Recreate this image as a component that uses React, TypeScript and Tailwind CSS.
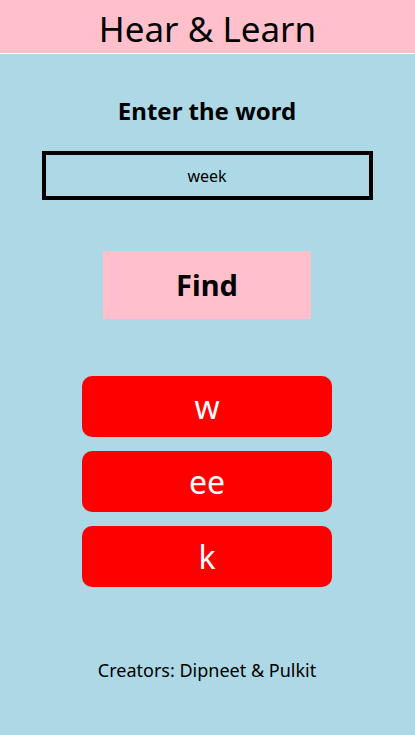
export default function App() {
  return (
    <div className="min-h-[735px] w-full bg-[#add8e6] font-['Noto_Sans',sans-serif] text-black">
      <div className="h-[54px] bg-[#ffc0cb] border-b border-white flex items-center justify-center">
        <h1 className="text-[35px] leading-none pt-[4px]">Hear &amp; Learn</h1>
      </div>
      <div className="flex flex-col items-center pr-[1px]">
        <h2 className="mt-[42px] text-[24px] font-bold leading-[30px]">Enter the word</h2>
        <div className="mt-[25px] w-[331px] h-[49px] border-4 border-black flex items-center justify-center">
          <span className="text-[16px]">week</span>
        </div>
        <button className="mt-[51px] w-[208px] h-[68px] bg-[#ffc0cb] text-[29px] font-bold flex items-center justify-center">Find</button>
        <div className="mt-[57px] flex flex-col gap-[14px]">
          {["w", "ee", "k"].map((s) => (
            <div key={s} className="w-[250px] h-[61px] rounded-[10px] bg-[#ff0000] text-white text-[32px] flex items-center justify-center">
              {s}
            </div>
          ))}
        </div>
        <p className="mt-[70px] text-[18px]">Creators: Dipneet &amp; Pulkit</p>
      </div>
    </div>
  );
}
